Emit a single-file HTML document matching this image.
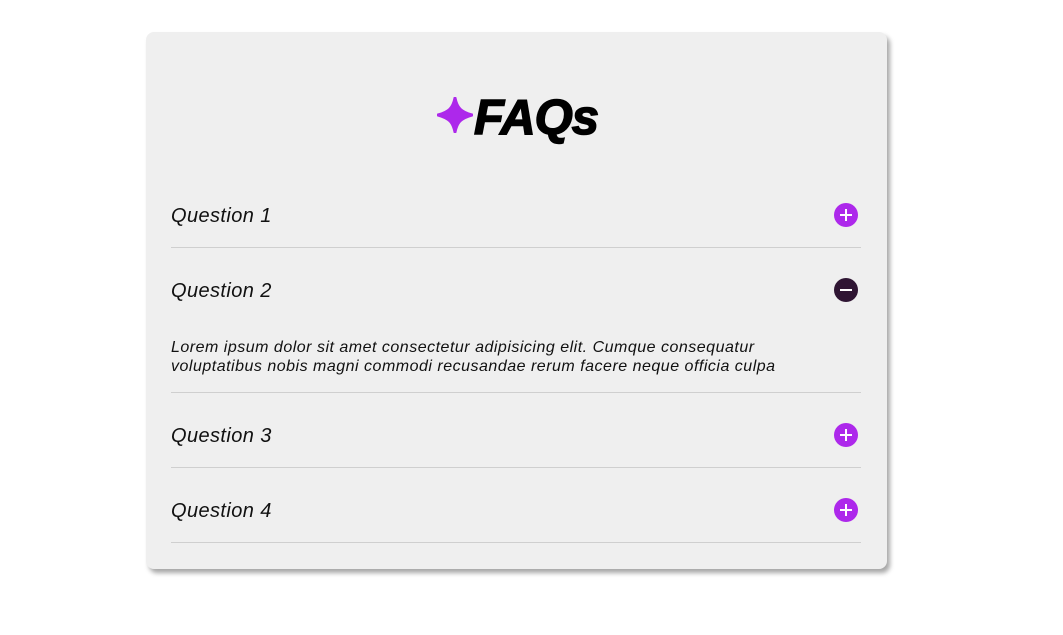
<!DOCTYPE html>
<html><head><style>
body{margin:0;background:#fff;width:1063px;height:635px;position:relative;font-family:"Liberation Sans",sans-serif;}
.card{position:absolute;left:146px;top:32px;width:741px;height:537px;background:#efefef;border-radius:8px;box-shadow:3px 4px 5px rgba(0,0,0,.35);}
.title{position:absolute;left:0;top:52px;width:100%;}
.title span{font-size:49px;font-weight:900;font-style:italic;letter-spacing:-1px;position:absolute;left:328px;top:10px;line-height:49px;-webkit-text-stroke:1.5px #000;}
.title svg{position:absolute;left:291px;top:13px;}
.q{position:absolute;left:25px;font-size:20px;font-style:italic;color:#111;letter-spacing:0.4px;}
.line{position:absolute;left:25px;width:690px;height:1px;background:#cfcfcf;}
.ic{position:absolute;left:688px;width:24px;height:24px;border-radius:50%;background:#ad28eb;}
.ic:before{content:"";position:absolute;left:6px;top:11px;width:12px;height:2px;background:#fff;}
.ic.p:after{content:"";position:absolute;left:11px;top:6px;width:2px;height:12px;background:#fff;}
.ic.d{background:#2f1533;}
.ans{position:absolute;left:25px;top:306px;font-size:16px;font-style:italic;line-height:19px;color:#111;letter-spacing:0.5px;white-space:nowrap;}
</style></head><body>
<div class="card">
<div class="title">
<svg width="36" height="36" viewBox="0 0 36 36"><path d="M18 1 C20 11 24 15 35 18 C24 21 20 25 18 35 C16 25 12 21 1 18 C12 15 16 11 18 1Z" fill="#ad28eb" stroke="#ad28eb" stroke-width="3" stroke-linejoin="round"/></svg>
<span>FAQs</span>
</div>
<div class="q" style="top:173px">Question 1</div><div class="ic p" style="top:171px"></div>
<div class="line" style="top:215px"></div>
<div class="q" style="top:248px">Question 2</div><div class="ic d" style="top:246px"></div>
<div class="ans">Lorem ipsum dolor sit amet consectetur adipisicing elit. Cumque consequatur<br>voluptatibus nobis magni commodi recusandae rerum facere neque officia culpa</div>
<div class="line" style="top:360px"></div>
<div class="q" style="top:393px">Question 3</div><div class="ic p" style="top:391px"></div>
<div class="line" style="top:435px"></div>
<div class="q" style="top:468px">Question 4</div><div class="ic p" style="top:466px"></div>
<div class="line" style="top:510px"></div>
</div>
</body></html>
